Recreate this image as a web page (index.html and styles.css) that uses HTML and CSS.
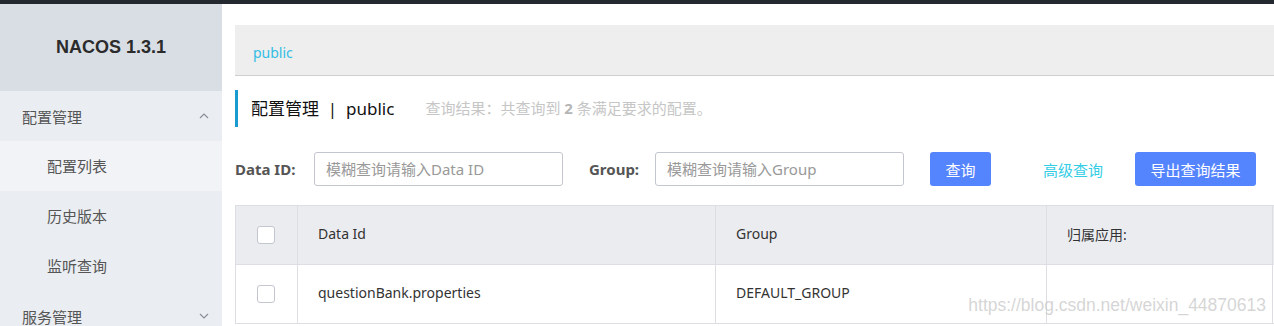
FILE: index.html
```html
<!DOCTYPE html>
<html lang="zh-CN">
<head>
    <meta charset="UTF-8">
    <title>Nacos</title>
    <link rel="stylesheet" href="styles.css">
</head>
<body>
    <div class="topbar"></div>
    <div class="layout">
        <div class="sidebar">
            <div class="brand">NACOS 1.3.1</div>
            <div class="menu-group">
                <span>配置管理</span>
                <svg class="chevron" width="10" height="6" viewBox="0 0 10 6"><polyline points="1,5 5,1 9,5" fill="none" stroke="#8a9099" stroke-width="1.2"/></svg>
            </div>
            <div class="menu-item active">配置列表</div>
            <div class="menu-item">历史版本</div>
            <div class="menu-item">监听查询</div>
            <div class="menu-group">
                <span>服务管理</span>
                <svg class="chevron" width="10" height="6" viewBox="0 0 10 6"><polyline points="1,1 5,5 9,1" fill="none" stroke="#8a9099" stroke-width="1.2"/></svg>
            </div>
        </div>

        <div class="main">
            <div class="breadcrumb">public</div>

            <div class="page-title">
                <h2>配置管理 &nbsp;|&nbsp; public</h2>
                <span class="result">查询结果：共查询到 <b>2</b> 条满足要求的配置。</span>
            </div>

            <div class="search-row">
                <label>Data ID:</label>
                <input type="text" placeholder="模糊查询请输入Data ID">
                <label class="group-label">Group:</label>
                <input type="text" placeholder="模糊查询请输入Group">
                <button class="btn">查询</button>
                <a class="link">高级查询</a>
                <button class="btn">导出查询结果</button>
            </div>

            <div class="table-wrap">
                <table>
                    <thead>
                        <tr>
                            <th class="col-check"><span class="checkbox"></span></th>
                            <th class="col-id">Data Id</th>
                            <th class="col-group">Group</th>
                            <th class="col-app">归属应用:</th>
                            <th></th>
                        </tr>
                    </thead>
                    <tbody>
                        <tr>
                            <td class="col-check"><span class="checkbox"></span></td>
                            <td>questionBank.properties</td>
                            <td>DEFAULT_GROUP</td>
                            <td></td>
                            <td></td>
                        </tr>
                    </tbody>
                </table>
                <div class="watermark">https://blog.csdn.net/weixin_44870613</div>
            </div>
        </div>
    </div>
</body>
</html>
```

FILE: styles.css
```css
body {
    margin: 0;
    padding: 0;
    font-family: "Noto Sans", "Noto Sans CJK SC", sans-serif;
    font-size: 14px;
    color: #333;
    background-color: white;
    overflow: hidden;
}

.topbar {
    height: 4px;
    background-color: #23292e;
}

.layout {
    display: flex;
    height: 322px;
}

.sidebar {
    width: 222px;
    flex-shrink: 0;
    background-color: #eaedf1;
}

.brand {
    height: 87px;
    background-color: #d9dee4;
    display: flex;
    justify-content: center;
    align-items: center;
    font-family: "Liberation Sans", Arial, sans-serif;
    font-weight: bold;
    font-size: 18px;
    color: #2b2b2b;
}

.menu-group {
    height: 50px;
    display: flex;
    align-items: center;
    justify-content: space-between;
    padding: 0 13px 0 22px;
    font-size: 15px;
    color: #555;
}

.menu-item {
    height: 50px;
    line-height: 50px;
    padding-left: 47px;
    font-size: 15px;
    color: #555;
}

.menu-item.active {
    background-color: #f2f3f7;
}

.main {
    flex: 1;
    min-width: 0;
    padding: 21px 0 0 13px;
    overflow: hidden;
}

.breadcrumb {
    height: 50px;
    line-height: 56px;
    background-color: #eeeeee;
    border-bottom: 1px solid #cfcfcf;
    padding-left: 18px;
    color: #33bde3;
}

.page-title {
    margin-top: 14px;
    height: 37px;
    box-sizing: border-box;
    padding: 0 0 3px 13px;
    border-left: 3px solid #1a9bd0;
    display: flex;
    align-items: center;
}

.page-title h2 {
    margin: 0;
    font-size: 17px;
    font-weight: normal;
    color: #111;
}

.result {
    margin-left: 31px;
    font-size: 15px;
    color: #c6c6c6;
}

.result b {
    color: #b5b5b5;
}

.search-row {
    margin-top: 25px;
    display: flex;
    align-items: center;
    height: 34px;
}

.search-row label {
    font-weight: bold;
    color: #555;
    font-size: 15px;
    width: 79px;
}

.search-row label.group-label {
    margin-left: 26px;
    width: 66px;
}

.search-row input {
    width: 249px;
    height: 34px;
    box-sizing: border-box;
    border: 1px solid #c4c6cf;
    border-radius: 3px;
    padding: 0 11px;
    font-family: inherit;
    font-size: 15px;
}

.search-row input::placeholder {
    color: #999;
}

.btn {
    height: 34px;
    border: none;
    border-radius: 3px;
    background-color: #5584ff;
    color: white;
    font-family: inherit;
    font-size: 15px;
    padding: 0 15.5px;
    margin-left: 26px;
    cursor: pointer;
}

.link {
    margin-left: 52px;
    margin-right: 32px;
    font-size: 15px;
    color: #33cde5;
    cursor: pointer;
}

.link + .btn {
    margin-left: 0;
}

.table-wrap {
    position: relative;
    margin-top: 19px;
}

table {
    border-collapse: collapse;
    width: 1300px;
    table-layout: fixed;
}

th, td {
    border: 1px solid #dcdee3;
    text-align: left;
    font-weight: normal;
    padding: 0 20px 3px;
    height: 59px;
    box-sizing: border-box;
    color: #333;
}

thead th {
    background-color: #ebecf0;
}

.col-check {
    width: 62px;
    padding: 0 0 0 21px;
}

.col-id {
    width: 418px;
}

.col-group {
    width: 331px;
}

.col-app {
    width: 226px;
}

.checkbox {
    display: block;
    width: 18px;
    height: 18px;
    box-sizing: border-box;
    border: 1px solid #c4c6cf;
    border-radius: 3px;
    background-color: white;
}

.watermark {
    position: absolute;
    right: 8px;
    top: 90px;
    font-family: "Liberation Sans", Arial, sans-serif;
    font-size: 17.5px;
    color: rgba(200, 200, 200, 0.75);
    pointer-events: none;
}
```
